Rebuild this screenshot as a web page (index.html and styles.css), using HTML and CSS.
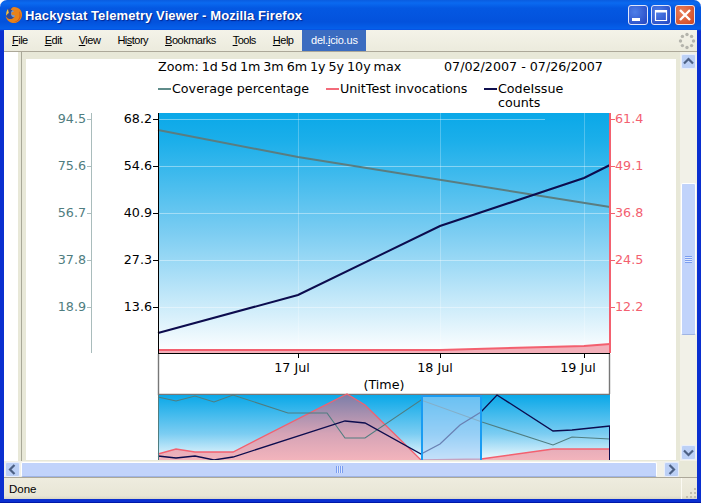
FILE: index.html

```html
<!DOCTYPE html>
<html>
<head>
<meta charset="utf-8"/>
<title>Hackystat Telemetry Viewer - Mozilla Firefox</title>
<link rel="stylesheet" href="styles.css">
</head>
<body>
<div class="window">
  <div class="titlebar">
    <svg class="app-icon" width="18" height="18" viewBox="0 0 18 18">
      <circle cx="9" cy="9" r="8" fill="#2f4a9a"/>
      <circle cx="10" cy="7.500" r="4" fill="#6f9bd8"/>
      <path d="M9 1c5 0 8.500 4 8 8.500-.5 4.500-4.500 8-9 7.500-3.800-.5-6.800-3.400-7.300-7 1.200 2.400 3.500 3.500 5.800 3 2.300-.6 3.500-2.300 3-4-1.600.5-3.200-.4-3.200-1.600 0-1.100 1.600-1.700 2.700-1.600C8.500 4.200 7 3.600 5.800 4.100 6.400 2.200 7.400 1 9 1z" fill="#e8821a"/>
      <path d="M14 5c2 2.500 2.300 6 .3 8.500-1.500 2-4 3-6.300 2.600 3.500-.1 6.300-2.800 6.600-5.900.1-1.800-.1-3.700-.6-5.200z" fill="#c9541a"/>
      <path d="M3 3C1.500 5 .8 7.500 1.300 10c.5-1.300 1.300-2.400 2.600-3C3.300 5.700 3.300 4.300 3 3z" fill="#f6c23e"/>
    </svg>
    <span class="title-text">Hackystat Telemetry Viewer - Mozilla Firefox</span>
    <div class="win-buttons">
      <div class="win-btn"><svg width="20" height="20" viewBox="0 0 20 20"><rect x="4" y="13" width="8" height="3" fill="#fff"/></svg></div>
      <div class="win-btn"><svg width="20" height="20" viewBox="0 0 20 20"><path d="M4.500 5.500h11v10h-11z" fill="none" stroke="#fff" stroke-width="1.200"/><rect x="4" y="5" width="12" height="2.500" fill="#fff"/></svg></div>
      <div class="win-btn close"><svg width="20" height="20" viewBox="0 0 20 20"><path d="M5 5l10 10M15 5L5 15" stroke="#fff" stroke-width="2.400"/></svg></div>
    </div>
  </div>

  <div class="menubar">
    <span class="menu-item"><u>F</u>ile</span>
    <span class="menu-item"><u>E</u>dit</span>
    <span class="menu-item"><u>V</u>iew</span>
    <span class="menu-item">Hi<u>s</u>tory</span>
    <span class="menu-item"><u>B</u>ookmarks</span>
    <span class="menu-item"><u>T</u>ools</span>
    <span class="menu-item"><u>H</u>elp</span>
    <span class="menu-item active">del.<u>i</u>cio.us</span>
    <svg class="throbber" width="18" height="18" viewBox="0 0 18 18" fill="#b4b4ac">
      <circle cx="9" cy="2.500" r="1.700"/><circle cx="13.600" cy="4.400" r="1.700"/><circle cx="15.500" cy="9" r="1.700"/><circle cx="13.600" cy="13.600" r="1.700"/>
      <circle cx="9" cy="15.500" r="1.700"/><circle cx="4.400" cy="13.600" r="1.700"/><circle cx="2.500" cy="9" r="1.700"/><circle cx="4.400" cy="4.400" r="1.700"/>
    </svg>
  </div>

  <div class="view">
    <div class="side-strip"></div>
    <div class="side-frame"></div>
    <div class="page">
      <svg class="chart" width="650" height="401" viewBox="26 59 650 401">
        <defs>
          <linearGradient id="sky" x1="0" y1="0" x2="0" y2="1">
            <stop offset="0" stop-color="#0aa8e8"/>
            <stop offset="0.12" stop-color="#1cafea"/>
            <stop offset="0.5" stop-color="#7ccdf2"/>
            <stop offset="1" stop-color="#ffffff"/>
          </linearGradient>
          <linearGradient id="sky-small" x1="0" y1="0" x2="0" y2="1">
            <stop offset="0" stop-color="#0aa8e8"/>
            <stop offset="0.6" stop-color="#7ccdf2"/>
            <stop offset="1" stop-color="#f2fafd"/>
          </linearGradient>
          <linearGradient id="blush" x1="0" y1="0" x2="0" y2="1">
            <stop offset="0" stop-color="#7a7da8"/>
            <stop offset="0.6" stop-color="#d5a3b6"/>
            <stop offset="1" stop-color="#f3b4bc"/>
          </linearGradient>
        </defs>

        <text class="label tight" x="158" y="71">Zoom: 1d 5d 1m 3m 6m 1y 5y 10y max</text>
        <text class="label" x="444" y="71">07/02/2007 - 07/26/2007</text>

        <rect x="158" y="88" width="13" height="2" fill="#5f8c8a"/>
        <text class="label" x="172" y="93">Coverage percentage</text>
        <rect x="326" y="88" width="13" height="2" fill="#f36b7a"/>
        <text class="label" x="340" y="93">UnitTest invocations</text>
        <rect x="484" y="88" width="13" height="2" fill="#10104f"/>
        <text class="label" x="498" y="93">CodeIssue</text>
        <text class="label" x="498" y="107">counts</text>

        <!-- main plot -->
        <rect x="158" y="113" width="452" height="240" fill="url(#sky)"/>
        <path d="M158 119.500H545M158 166.500H610M158 213.500H610M158 260.500H610M158 307.500H610" stroke="#fff" stroke-opacity="0.4"/>
        <path d="M298.500 113V353M440.500 113V353M584.500 113V353" stroke="#fff" stroke-opacity="0.25"/>
        <path d="M158 350L440 350L584 346L610 344V353H158z" fill="#f3b0ba"/>
        <polyline points="158,350 440,350 584,346 610,344" fill="none" stroke="#f3606f" stroke-width="2"/>
        <polyline points="158,130 298,157 610,207" fill="none" stroke="#5a7d80" stroke-width="2"/>
        <polyline points="158,333 298,295 440,226 584,178 610,165" fill="none" stroke="#0c0c4e" stroke-width="2"/>

        <!-- left axes -->
        <path d="M91.500 113V353M87 119.500H91M87 166.500H91M87 213.500H91M87 260.500H91M87 307.500H91" fill="none" stroke="#a9bcbc"/>
        <g class="teal">
          <text class="label" x="86" y="123" text-anchor="end">94.5</text>
          <text class="label" x="86" y="170" text-anchor="end">75.6</text>
          <text class="label" x="86" y="217" text-anchor="end">56.7</text>
          <text class="label" x="86" y="264" text-anchor="end">37.8</text>
          <text class="label" x="86" y="311" text-anchor="end">18.9</text>
        </g>
        <path d="M158.500 113V353M153 119.500H158M153 166.500H158M153 213.500H158M153 260.500H158M153 307.500H158" fill="none" stroke="#000"/>
        <text class="label" x="152" y="123" text-anchor="end">68.2</text>
        <text class="label" x="152" y="170" text-anchor="end">54.6</text>
        <text class="label" x="152" y="217" text-anchor="end">40.9</text>
        <text class="label" x="152" y="264" text-anchor="end">27.3</text>
        <text class="label" x="152" y="311" text-anchor="end">13.6</text>

        <!-- right axis -->
        <path d="M610 113V353" stroke="#f3606f" stroke-width="2" fill="none"/>
        <path d="M611 119.500H615M611 166.500H615M611 213.500H615M611 260.500H615M611 307.500H615" stroke="#f3606f" fill="none"/>
        <g class="pink">
          <text class="label" x="615" y="123">61.4</text>
          <text class="label" x="615" y="170">49.1</text>
          <text class="label" x="615" y="217">36.8</text>
          <text class="label" x="615" y="264">24.5</text>
          <text class="label" x="615" y="311">12.2</text>
        </g>

        <!-- x axis box -->
        <rect x="158" y="354" width="452" height="40" fill="#fff"/>
        <path d="M158 353.500H610M298.500 354V358M440.500 354V358M584.500 354V358" stroke="#000" fill="none"/>
        <path d="M158.500 354V394.500H610M609.500 354V394" stroke="#777" stroke-width="1.400" fill="none"/>
        <text class="label" x="292" y="372" text-anchor="middle">17 Jul</text>
        <text class="label" x="435" y="372" text-anchor="middle">18 Jul</text>
        <text class="label" x="578" y="372" text-anchor="middle">19 Jul</text>
        <text class="label" x="384" y="389" text-anchor="middle">(Time)</text>

        <!-- overview strip -->
        <rect x="158" y="395" width="452" height="65" fill="url(#sky-small)"/>
        <path d="M158 454L176 449L195 452L233 452L347 394L365 405L421 460L481 459L553 449L610 449V460H158z" fill="url(#blush)"/>
        <polyline points="158,454 176,449 195,452 233,452 347,394 365,405 421,460 481,459 553,449 610,449" fill="none" stroke="#f3606f" stroke-width="1.300"/>
        <polyline points="158,397 176,401 195,396 214,402 233,395 288,413 327,413 345,438 365,438 421,400 482,422 553,445 572,437 610,439" fill="none" stroke="#4f7d80" stroke-width="1.100"/>
        <polyline points="158,456 176,458 195,456 214,460 233,457 345,421 365,423 421,454 440,444 460,425 481,412 497,395 553,431 572,430 610,426" fill="none" stroke="#0c0c4e" stroke-width="1.300"/>
        <path d="M158.500 395V460" stroke="#4f7d80" fill="none"/>
        <path d="M609.500 426V460" stroke="#0c0c4e" fill="none"/>
        <rect x="422" y="396" width="59" height="66" fill="#a8d0f8" fill-opacity="0.6" stroke="#1a9cf2" stroke-width="2"/>
      </svg>
    </div>
    <div class="side-right"></div>
    <div class="vscroll">
      <div class="scroll-btn"><svg width="15" height="15" viewBox="0 0 15 15"><path d="M3 9.500l4.500-4.500 4.500 4.500" fill="none" stroke="#4d6185" stroke-width="2.200"/></svg></div>
      <div class="vthumb"><span class="grip-h"></span></div>
      <div class="scroll-btn"><svg width="15" height="15" viewBox="0 0 15 15"><path d="M3 5.500l4.500 4.500 4.500-4.500" fill="none" stroke="#4d6185" stroke-width="2.200"/></svg></div>
    </div>
  </div>

  <div class="hscroll">
    <div class="scroll-btn"><svg width="15" height="15" viewBox="0 0 15 15"><path d="M9.500 3l-4.500 4.500 4.500 4.500" fill="none" stroke="#4d6185" stroke-width="2.200"/></svg></div>
    <div class="hthumb"><span class="grip-v"></span></div>
    <div class="scroll-btn"><svg width="15" height="15" viewBox="0 0 15 15"><path d="M5.500 3l4.500 4.500-4.500 4.500" fill="none" stroke="#4d6185" stroke-width="2.200"/></svg></div>
    <div class="scroll-corner"></div>
  </div>

  <div class="statusbar">
    <span class="status-text">Done</span>
    <div class="resize-box">
      <svg width="12" height="12" viewBox="0 0 12 12" fill="#c2bfae"><rect x="9" y="1" width="2" height="2"/><rect x="5" y="5" width="2" height="2"/><rect x="9" y="5" width="2" height="2"/><rect x="1" y="9" width="2" height="2"/><rect x="5" y="9" width="2" height="2"/><rect x="9" y="9" width="2" height="2"/></svg>
    </div>
  </div>
</div>
</body>
</html>
```

FILE: styles.css

```css
html, body { margin: 0; height: 100%; background: #fff; }
body { font-family: "Liberation Sans", Arial, sans-serif; overflow: hidden; }

.window {
  width: 701px; height: 503px; box-sizing: border-box;
  padding: 0 4px 4px 4px;
  display: flex; flex-direction: column;
  border-radius: 7px 7px 0 0;
  overflow: hidden;
  background: linear-gradient(#0a5ce0 0, #0a6af0 3px, #0458e2 8px, #0352dc 22px, #0560ea 29px, #0a2fd0 31px, #0a2fd0 100%);
  box-shadow: inset 0 -1px 0 #0018a8;
}

.titlebar { height: 30px; display: flex; align-items: center; flex: none; }
.app-icon { margin: 0 2px 0 1px; flex: none; }
.title-text {
  font-family: "Liberation Sans", sans-serif; font-weight: bold; font-size: 13px;
  letter-spacing: 0.1px;
  color: #fff; text-shadow: 1px 1px 1px #06248c; white-space: nowrap;
}
.win-buttons { margin-left: auto; margin-right: 2px; display: flex; gap: 3px; }
.win-btn {
  width: 20px; height: 20px;
  outline: 1px solid #dfe6fb; outline-offset: -1px;
  border-radius: 3px;
  background: radial-gradient(circle at 35% 35%, #4f7fe8, #2a4fc8 75%, #2345c0);
}
.win-btn.close { margin-left: 1px; background: radial-gradient(circle at 35% 35%, #e8805c, #d64f28 75%, #c03c1c); }
.win-btn svg { display: block; }

.menubar {
  height: 22px; flex: none; box-sizing: border-box;
  display: flex; align-items: center;
  background: linear-gradient(#f4f3e9, #ecebdd);
  border-bottom: 1px solid #aca899;
  font-family: "Liberation Sans", sans-serif; font-size: 11px; color: #000;
}
.menu-item { padding: 0 8px; margin-right: 1px; line-height: 21px; white-space: nowrap; letter-spacing: -0.5px; }
.menu-item.active { background: #3b6cc0; color: #fff; padding: 0 8.5px; letter-spacing: -0.2px; }
.throbber { margin-left: auto; margin-right: 1px; }

.view { height: 409px; flex: none; display: flex; background: #fff; }
.side-strip { width: 14px; flex: none; }
.side-frame {
  width: 8px; flex: none;
  background: #e8e8d8;
  background-image: linear-gradient(90deg, transparent 3px, #a8a898 3px, #a8a898 4px, transparent 4px);
}
.page { width: 650px; flex: none; padding-top: 7px; box-sizing: border-box; background: #e8e8d8; overflow: hidden; }
.side-right { width: 4px; flex: none; background: #e8e8d8; }
.chart { display: block; background: #fff; }

.label { font-family: "DejaVu Sans", sans-serif; font-size: 12.7px; fill: #000; white-space: pre; }
.label.tight { word-spacing: -1.1px; }
.teal .label { fill: #4f7d80; }
.pink .label { fill: #f3606f; }

.vscroll {
  width: 17px; flex: none; box-sizing: border-box;
  display: flex; flex-direction: column; align-items: center;
  padding: 2px 1px;
  background: #f2f1e8;
}
.scroll-btn {
  width: 15px; height: 15px; flex: none;
  background: #bcd0f6; border: 1px solid #e8eefc; box-sizing: border-box; border-radius: 2px;
  display: flex; align-items: center; justify-content: center;
}
.scroll-btn svg { flex: none; }
.vthumb {
  width: 15px; height: 152px; flex: none; box-sizing: border-box;
  margin: 114px 0 110px;
  background: #c1d3fb; border: 1px solid #fff; border-bottom-color: #9fb4e4; border-radius: 2px;
  display: flex; align-items: center; justify-content: center;
}
.grip-h {
  width: 7px; height: 7px; display: block;
  background: repeating-linear-gradient(#7a9df0 0, #7a9df0 1px, #dfe8fd 1px, #dfe8fd 2px);
}

.hscroll {
  height: 16px; flex: none; display: flex; align-items: center;
  padding-left: 1px; box-sizing: border-box;
  background: #f2f1e8;
}
.hthumb {
  width: 636px; height: 15px; flex: none; box-sizing: border-box;
  margin: 0 7px 0 1px;
  background: #c1d3fb; border: 1px solid #fff; border-bottom-color: #9fb4e4; border-radius: 2px;
  display: flex; align-items: center; justify-content: center;
}
.grip-v {
  width: 7px; height: 7px; display: block;
  background: repeating-linear-gradient(90deg, #7a9df0 0, #7a9df0 1px, #dfe8fd 1px, #dfe8fd 2px);
}
.scroll-corner { flex: 1; align-self: stretch; background: #e8e8d8; }

.statusbar {
  height: 22px; flex: none; box-sizing: border-box;
  display: flex; align-items: center; justify-content: space-between;
  background: linear-gradient(#eeecdf, #e8e6d6 85%, #d8d6c6);
  border-top: 1px solid #aca899;
  font-family: "Liberation Sans", sans-serif; font-size: 11.500px; color: #000;
}
.status-text { padding-left: 5px; }
.resize-box {
  height: 100%; width: 16px; box-sizing: border-box;
  border-left: 1px solid #fbfaf3;
  display: flex; align-items: flex-end; justify-content: flex-end;
}
.resize-box svg { display: block; }
```
